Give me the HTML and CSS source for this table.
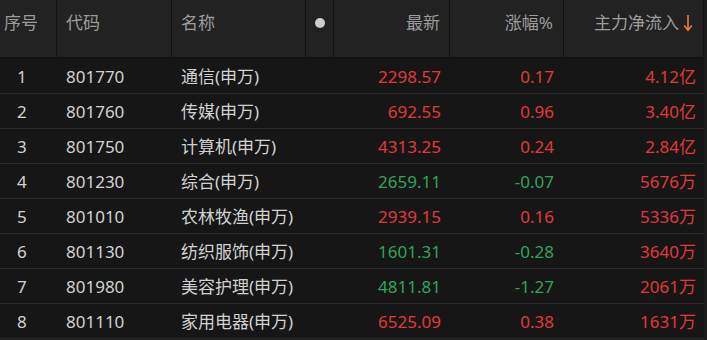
FILE: index.html
```html
<!DOCTYPE html>
<html lang="zh">
<head>
<meta charset="utf-8">
<link rel="stylesheet" href="styles.css">
</head>
<body>
<div class="board">
  <div class="row head">
    <div class="c c1">序号</div>
    <div class="c c2">代码</div>
    <div class="c c3">名称</div>
    <div class="c c4"><span class="dot"></span></div>
    <div class="c c5">最新</div>
    <div class="c c6">涨幅%</div>
    <div class="c c7">主力净流入<svg class="arrow" width="10" height="18" viewBox="0 0 10 18"><path d="M5 1 V16 M1.2 11.5 L5 16.2 L8.8 11.5" fill="none" stroke="currentColor" stroke-width="1.6"/></svg></div>
  </div>
  <div class="row"><div class="c c1">1</div><div class="c c2">801770</div><div class="c c3">通信(申万)</div><div class="c c4"></div><div class="c c5 up">2298.57</div><div class="c c6 up">0.17</div><div class="c c7 up">4.12亿</div></div>
  <div class="row"><div class="c c1">2</div><div class="c c2">801760</div><div class="c c3">传媒(申万)</div><div class="c c4"></div><div class="c c5 up">692.55</div><div class="c c6 up">0.96</div><div class="c c7 up">3.40亿</div></div>
  <div class="row"><div class="c c1">3</div><div class="c c2">801750</div><div class="c c3">计算机(申万)</div><div class="c c4"></div><div class="c c5 up">4313.25</div><div class="c c6 up">0.24</div><div class="c c7 up">2.84亿</div></div>
  <div class="row"><div class="c c1">4</div><div class="c c2">801230</div><div class="c c3">综合(申万)</div><div class="c c4"></div><div class="c c5 down">2659.11</div><div class="c c6 down">-0.07</div><div class="c c7 up">5676万</div></div>
  <div class="row"><div class="c c1">5</div><div class="c c2">801010</div><div class="c c3">农林牧渔(申万)</div><div class="c c4"></div><div class="c c5 up">2939.15</div><div class="c c6 up">0.16</div><div class="c c7 up">5336万</div></div>
  <div class="row"><div class="c c1">6</div><div class="c c2">801130</div><div class="c c3">纺织服饰(申万)</div><div class="c c4"></div><div class="c c5 down">1601.31</div><div class="c c6 down">-0.28</div><div class="c c7 up">3640万</div></div>
  <div class="row"><div class="c c1">7</div><div class="c c2">801980</div><div class="c c3">美容护理(申万)</div><div class="c c4"></div><div class="c c5 down">4811.81</div><div class="c c6 down">-1.27</div><div class="c c7 up">2061万</div></div>
  <div class="row"><div class="c c1">8</div><div class="c c2">801110</div><div class="c c3">家用电器(申万)</div><div class="c c4"></div><div class="c c5 up">6525.09</div><div class="c c6 up">0.38</div><div class="c c7 up">1631万</div></div>
</div>
</body>
</html>
```

FILE: styles.css
```css
html, body {
  margin: 0;
  padding: 0;
  background: #1c1c1c;
}
body {
  width: 707px;
  height: 340px;
  overflow: hidden;
  font-family: "Noto Sans", "Noto Sans CJK SC", sans-serif;
  font-size: 17px;
}
.board {
  width: 704px;
  background: #161616;
}
.row {
  display: grid;
  grid-template-columns: 57px 115px 134px 28px 116px 114px 140px;
  height: 35px;
  box-sizing: border-box;
  border-bottom: 1px solid #2a2a2a;
  color: #d2d2d2;
}
.row.head {
  height: 59px;
  background: #222222;
  border-bottom: 2px solid #131313;
  color: #9c9c9c;
}
.c {
  display: flex;
  align-items: center;
  box-sizing: border-box;
  white-space: nowrap;
  line-height: 1;
}
.head .c {
  border-right: 1px solid #121212;
  padding-bottom: 12px;
}
.c1 { padding-left: 17px; }
.head .c1 { padding-left: 4px; }
.c2 { padding-left: 9px; }
.c3 { padding-left: 9px; }
.c4 { justify-content: center; }
.c5 { justify-content: flex-end; padding-right: 9px; }
.c6 { justify-content: flex-end; padding-right: 10px; }
.c7 { justify-content: flex-end; padding-right: 8px; }
.head .c7 { padding-right: 10px; }
.dot {
  width: 10px;
  height: 10px;
  border-radius: 50%;
  background: #cdcdcd;
  margin-left: 1px;
}
.arrow {
  color: #ee7a2a;
  margin-left: 4px;
}
.up { color: #e2383c; }
.down { color: #2ea55a; }
```
